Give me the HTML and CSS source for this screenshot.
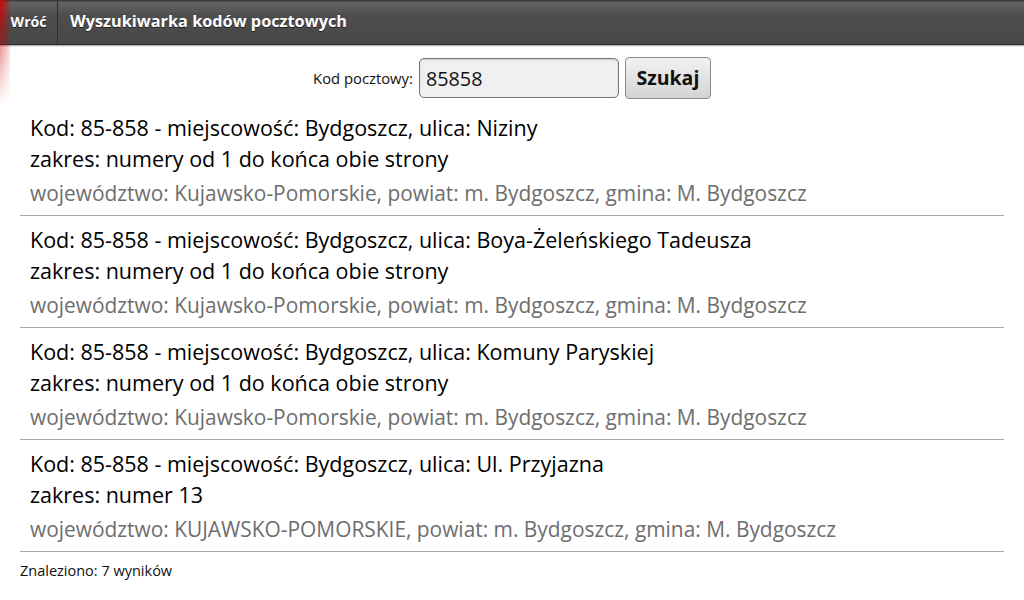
FILE: index.html
```html
<!DOCTYPE html>
<html lang="pl">
<head>
<meta charset="utf-8">
<title>Wyszukiwarka kodów pocztowych</title>
<link rel="stylesheet" href="styles.css">
</head>
<body>
<div class="glow"></div>
<header class="topbar">
  <button class="back">Wróć</button>
  <h1 class="title">Wyszukiwarka kodów pocztowych</h1>
</header>
<form class="search">
  <label class="search-label" for="kod">Kod pocztowy:</label>
  <input class="search-input" id="kod" type="text" value="85858">
  <button class="search-btn" type="button">Szukaj</button>
</form>
<main class="results">
  <div class="row">
    <div class="line">Kod: 85-858 - miejscowość: Bydgoszcz, ulica: Niziny</div>
    <div class="line">zakres: numery od 1 do końca obie strony</div>
    <div class="meta">województwo: Kujawsko-Pomorskie, powiat: m. Bydgoszcz, gmina: M. Bydgoszcz</div>
  </div>
  <div class="row">
    <div class="line">Kod: 85-858 - miejscowość: Bydgoszcz, ulica: Boya-Żeleńskiego Tadeusza</div>
    <div class="line">zakres: numery od 1 do końca obie strony</div>
    <div class="meta">województwo: Kujawsko-Pomorskie, powiat: m. Bydgoszcz, gmina: M. Bydgoszcz</div>
  </div>
  <div class="row">
    <div class="line">Kod: 85-858 - miejscowość: Bydgoszcz, ulica: Komuny Paryskiej</div>
    <div class="line">zakres: numery od 1 do końca obie strony</div>
    <div class="meta">województwo: Kujawsko-Pomorskie, powiat: m. Bydgoszcz, gmina: M. Bydgoszcz</div>
  </div>
  <div class="row">
    <div class="line">Kod: 85-858 - miejscowość: Bydgoszcz, ulica: Ul. Przyjazna</div>
    <div class="line">zakres: numer 13</div>
    <div class="meta">województwo: KUJAWSKO-POMORSKIE, powiat: m. Bydgoszcz, gmina: M. Bydgoszcz</div>
  </div>
  <div class="count">Znaleziono: 7 wyników</div>
</main>
</body>
</html>
```
FILE: styles.css
```css
* { box-sizing: border-box; }
html, body { margin: 0; padding: 0; background: #fff; }
body {
  width: 1024px;
  height: 600px;
  overflow: hidden;
  font-family: "Open Sans", "Noto Sans", sans-serif;
  color: #000;
  position: relative;
}
.glow {
  position: absolute;
  left: 0;
  top: 0;
  width: 10px;
  height: 105px;
  background: linear-gradient(to bottom, rgba(210,0,0,0.9) 0%, rgba(210,0,0,0.45) 40%, rgba(210,0,0,0) 100%);
  -webkit-mask: linear-gradient(to right, #000 0%, rgba(0,0,0,0.25) 100%);
  mask: linear-gradient(to right, #000 0%, rgba(0,0,0,0.25) 100%);
  z-index: 5;
  pointer-events: none;
}
.topbar {
  height: 45px;
  display: flex;
  align-items: stretch;
  background: linear-gradient(to bottom, #3c3c3c 0, #3c3c3c 1px, #646464 2px, #4d4d4d 16px, #474747 100%);
  border-bottom: 1px solid #2b2b2b;
  box-shadow: 0 1px 0 #b5b5b5, 0 2px 0 #e6e6e6;
}
.back {
  width: 58px;
  border: 0;
  border-right: 1px solid #2e2e2e;
  background: transparent;
  color: #fff;
  font-family: "Open Sans", sans-serif;
  font-weight: 700;
  font-size: 14px;
  padding: 0 0 2px 0;
  text-shadow: 0 1px 0 #222;
}
.title {
  margin: 0 0 0 12px;
  align-self: center;
  color: #fff;
  font-size: 16.3px;
  font-weight: 700;
  padding-bottom: 2px;
  text-shadow: 0 1px 0 #222;
}
.search {
  display: flex;
  justify-content: center;
  align-items: center;
  gap: 6px;
  padding: 7px 0 0 0;
  height: 59px;
  margin: 0;
}
.search-label {
  font-size: 14.8px;
  color: #111;
}
.search-input {
  width: 200px;
  height: 40px;
  border: 1px solid #777;
  border-radius: 5px;
  background: #f0f0f0;
  box-shadow: inset 0 1px 2px rgba(0,0,0,0.15);
  font-family: "Open Sans", sans-serif;
  font-size: 19.8px;
  padding: 0 6px;
  color: #111;
}
.search-btn {
  width: 86px;
  height: 42px;
  border: 1px solid #8a8a8a;
  border-radius: 4px;
  background: linear-gradient(to bottom, #f2f2f2, #d4d4d4);
  font-family: "Open Sans", sans-serif;
  font-weight: 700;
  font-size: 19.5px;
  color: #111;
  padding: 0 0 2px 0;
}
.results {
  margin: 0 20px;
}
.row {
  padding: 8px 10px 7px 10px;
  border-bottom: 1px solid #a8a8a8;
}
.line {
  font-size: 21.5px;
  line-height: 31px;
  white-space: nowrap;
}
.meta {
  margin-top: 4px;
  font-size: 20.9px;
  line-height: 30px;
  color: #6e6e6e;
  white-space: nowrap;
}
.count {
  margin-top: 10px;
  font-size: 14.5px;
  line-height: 18px;
  color: #111;
}
```
